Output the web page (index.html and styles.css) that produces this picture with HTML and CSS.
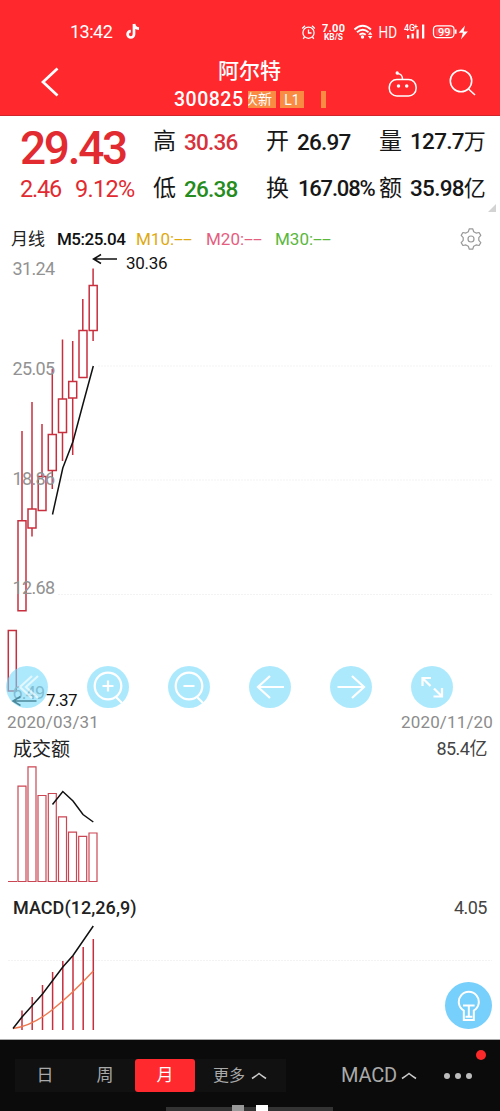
FILE: index.html
```html
<!DOCTYPE html>
<html lang="zh-CN">
<head>
<meta charset="utf-8">
<title>阿尔特 300825</title>
<link rel="stylesheet" href="styles.css">
</head>
<body>
<main class="app">
  <header class="header">
    <div class="status">
      <span class="clock">13:42</span>
      <svg class="note" width="15" height="17" viewBox="0 0 15 17"><path d="M8 1v10.3a3.2 3.2 0 1 1-3.2-3.2M8 1c.4 3 2.1 4.4 5 4.6" fill="none" stroke="#fff" stroke-width="2.7"/></svg>
      <svg class="signals" width="170" height="24" viewBox="300 20 170 24" fill="none" stroke="#fff" stroke-width="1.3">
        <circle cx="308.5" cy="32.7" r="5.6"/><path d="M308.5 29.5v3.5h3M302.2 28.5l2.8-2.8M314.8 28.5l-2.8-2.8M304.5 37l-1.3 1.8M312.5 37l1.3 1.8"/>
        <g fill="#fff" stroke="none">
          <text class="bold" x="322" y="31.5" font-size="11" textLength="23">7.00</text>
          <text class="bold" x="324" y="40.3" font-size="8.5" textLength="19" lengthAdjust="spacingAndGlyphs">KB/S</text>
          <text x="378.5" y="38" font-size="17" textLength="18.5" lengthAdjust="spacingAndGlyphs">HD</text>
          <text class="medium" x="404" y="31" font-size="9" textLength="11" lengthAdjust="spacingAndGlyphs">4G</text>
          <text class="bold" x="414" y="28.500" font-size="7">+</text>
          <text class="medium" x="438" y="35.700" font-size="11" textLength="12.500" lengthAdjust="spacingAndGlyphs">99</text>
          <circle cx="362.500" cy="37" r="1.700"/>
          <path d="M368 34.800l2.200-3 2.200 3zM368 36l2.200 3 2.200-3zM407 35h2.300v3.500H407zM411.500 33.500h2.300v5h-2.300zM416.500 29.500h2.200v9h-2.200zM422 24.500h2.300v14H422zM465 25.500l-6.300 7.200h4.200l-2 6.800 7-8h-4.300z"/>
        </g>
        <path d="M354.500 29.500q8-7.500 16.500 0M357 32.300q5.800-5 11.500 0M359.500 34.800q3-2.600 6.200 0" stroke-width="1.900"/>
        <rect x="433.500" y="25.800" width="20.500" height="11.800" rx="3.500"/><path d="M455.800 29.500v4.200" stroke-width="1.600"/><rect x="435.600" y="27.900" width="16.300" height="7.600" rx="2" fill="#fff" fill-opacity=".18" stroke="none"/>
      </svg>
    </div>
    <div class="titlebar">
      <svg class="back" width="20" height="32" viewBox="0 0 20 32"><path d="M17.500 2.500L3 16l14.500 13.500" fill="none" stroke="#fff" stroke-width="2.700"/></svg>
      <div class="stock">
        <h1 class="name">阿尔特</h1>
        <div class="code-row"><span class="code">300825</span><span class="clip"><span>次新</span></span><span class="tag">L1</span><span class="sliver"></span></div>
      </div>
      <svg class="robot" width="30" height="28" viewBox="0 0 30 28" fill="none" stroke="#fff" stroke-width="1.500"><rect x="1.300" y="9.500" width="26.800" height="16.500" rx="7.500"/><path d="M14.500 9.500c0-4-1-5.500-5-6"/><circle cx="9.200" cy="3" r=".9" fill="#fff"/><circle cx="10.500" cy="16" r="1" fill="#fff"/><circle cx="18.700" cy="16" r="1" fill="#fff"/></svg>
      <svg class="search" width="28" height="28" viewBox="0 0 28 28" fill="none" stroke="#fff" stroke-width="1.600"><circle cx="12" cy="12" r="10.700"/><path d="M19.500 20l6.500 6"/></svg>
    </div>
  </header>

  <section class="quote">
    <div class="price-box">
      <div class="price">29.43</div>
      <div class="change"><span>2.46</span><span class="pct">9.12%</span></div>
    </div>
    <div class="stats">
      <div class="stat"><span class="label">高</span><b class="up">30.36</b></div>
      <div class="stat"><span class="label">开</span><b>26.97</b></div>
      <div class="stat"><span class="label">量</span><b class="right">127.7<i>万</i></b></div>
      <div class="stat"><span class="label">低</span><b class="down">26.38</b></div>
      <div class="stat"><span class="label">换</span><b class="turnover">167.08%</b></div>
      <div class="stat"><span class="label">额</span><b class="right">35.98<i>亿</i></b></div>
    </div>
    <span class="corner"></span>
  </section>

  <section class="chart">
    <div class="legend">
      <span class="period">月线</span><span class="m5">M5:25.04</span><span class="m10">M10:<span class="dash">--</span></span><span class="m20">M20:<span class="dash">--</span></span><span class="m30">M30:<span class="dash">--</span></span>
      <svg class="gear" width="24" height="24" viewBox="0 0 24 24" fill="none" stroke="#999" stroke-width="1.200"><circle cx="12" cy="12" r="3"/><path d="M10.300 1.800h3.400l1 2.900 2.400 1.400 3-.6 1.700 2.900-2 2.300v2.600l2 2.300-1.700 2.900-3-.6-2.400 1.400-1 2.900h-3.400l-1-2.900-2.400-1.400-3 .6-1.700-2.900 2-2.300v-2.600l-2-2.300 1.700-2.900 3 .6 2.400-1.400z" stroke-linejoin="round"/></svg>
    </div>
    <svg class="plot" width="500" height="458" viewBox="0 252 500 458">
      <path class="gridline" d="M98 366H492M58 480H492M58 594.500H492"/>
      <path class="candle" d="M12.300 630.500h4v60.500h-8v-60.500zM22 431v89.700M18 520.700h8v90h-8zM32 402v107M28 509h8v19h-8zM32 528v8.500M42 424v52.500M38.200 476.500h7.800v34h-7.800zM52.300 369v65.500M48.300 434.500h8v36h-8zM52.300 470.500v18.500M62.500 339.500v59.500M58.500 399h8v33.500h-8zM62.500 432.500v28.500M72.700 341v40.500M68.700 381.500h8v16.500h-8zM72.700 398v57M82.800 299v31.500M79 330.500h8v47h-8zM93.100 268.500v17M89.200 285.500h8v45h-8zM93.100 330.500v10.500"/>
      <path class="average" d="M52.500 514.500L62.800 468 73 441.500 83 404 93.300 366"/>
      <g class="axis">
        <text x="12.500" y="274.800" textLength="42.500">31.24</text>
        <text x="12.500" y="375.300" textLength="42.500">25.05</text>
        <text x="12.500" y="485.300" textLength="42.500">18.86</text>
        <text x="12.500" y="594.300" textLength="42.500">12.68</text>
        <text x="12.500" y="699.300" textLength="32.500">6.49</text>
      </g>
      <path class="pointer" d="M117 259H93.500M101 254.500l-7.500 4.500 7.500 4.500M36.500 701H13M20.500 696.500L13 701l7.500 4.500"/>
      <g class="extreme"><text x="126" y="269" textLength="41.500">30.36</text><text x="46" y="706" textLength="31.500">7.37</text></g>
    </svg>
    <div class="tools">
      <span class="tool rewind"><svg viewBox="0 0 42 42"><path d="M26 10L14 21l12 11M32 10L20 21l12 11"/></svg></span>
      <span class="tool"><svg viewBox="0 0 42 42"><circle cx="21" cy="20" r="13.300"/><path d="M21 14.500v11M15.500 20h11M29 31l6 6"/></svg></span>
      <span class="tool"><svg viewBox="0 0 42 42"><circle cx="21" cy="20" r="13.300"/><path d="M15.500 20h11M29 31l6 6"/></svg></span>
      <span class="tool"><svg viewBox="0 0 42 42"><path d="M35 21H9M21 10L9 21l12 11"/></svg></span>
      <span class="tool"><svg viewBox="0 0 42 42"><path d="M7.500 21H33M22 10l12 11-12 11"/></svg></span>
      <span class="tool"><svg viewBox="0 0 42 42"><path d="M11.500 20v-8H20M12 12.500l7.500 7.500M22.500 30.500H31V22M31 30.500l-8-8"/></svg></span>
    </div>
    <div class="dates"><span>2020/03/31</span><span>2020/11/20</span></div>
  </section>

  <section class="panel volume">
    <div class="panel-head"><span class="panel-title cjk">成交额</span><span class="panel-value">85.4亿</span></div>
    <svg class="plot" width="500" height="127" viewBox="0 763 500 127">
      <path class="bars" d="M8 881.500h9M18 881.500V786.200h8v95.300zM28 881.500V766.800h8v114.700zM38 881.500V795.500h8v86zM48.300 881.500V793.500h8v88zM58.500 881.500V816.800h8v64.700zM68.500 881.500V832.200h8v49.300zM78.700 881.500V836.300h8v45.200zM89 881.500V833h8v48.500z"/>
      <path class="average" d="M52.500 804.500L62.800 791.500 73 801 83 814.500 93.300 822"/>
    </svg>
  </section>

  <section class="panel macd">
    <div class="panel-head"><span class="panel-title indicator-title">MACD(12,26,9)</span><span class="panel-value">4.05</span></div>
    <svg class="plot" width="500" height="117" viewBox="0 922 500 117">
      <path class="gridline" d="M8 960.500H492"/>
      <path class="candle" d="M22 1010.500v19.500M32.200 997v33M42.500 985v45M52.600 972v58M62.800 961v69M73 956v74M83.200 947v83M93.300 939v91"/>
      <path class="signal" d="M13 1028.500Q32 1026 52 1010T93.300 971"/>
      <path class="average" d="M13 1028.500L22 1017 42.500 994 62.800 967 73 955.500 93.300 926"/>
    </svg>
    <span class="tip"><svg width="47" height="47" viewBox="0 0 47 47" fill="none" stroke="#fff" stroke-width="2"><path d="M18.800 28.500a10 10 0 1 1 10 0v9.500h-10zM18 23.500h11.600M23.800 23.500v11M20.500 34.800h6.800"/></svg></span>
  </section>

  <footer class="bottom">
    <nav class="periods"><span>日</span><span>周</span><span class="active">月</span><span class="more">更多<svg width="16" height="8" viewBox="0 0 16 8"><path d="M1 6.500Q5 4 8 1.500 11 4 15 6.500"/></svg></span></nav>
    <span class="indicator">MACD<svg width="16" height="8" viewBox="0 0 16 8"><path d="M1 6.500Q5 4 8 1.500 11 4 15 6.500"/></svg></span>
    <span class="dots"><i></i><i></i><i></i></span>
    <span class="badge"></span>
    <span class="handle"><i></i><i></i></span>
  </footer>
</main>
</body>
</html>
```
FILE: styles.css
```css
* { box-sizing: border-box; }
body { margin: 0; background: #fff; }
.app { width: 500px; height: 1111px; overflow: hidden; font-family: Roboto, "Noto Sans CJK SC", sans-serif; color: #222; }
i { font-style: normal; }
svg { display: block; flex: none; }

.header { height: 116px; background: #ff282d; border-bottom: 1px solid #cf252b; color: #fff; }
.status { height: 58px; padding: 20px 30px 0 70px; display: flex; align-items: flex-start; }
.clock { width: 56px; font-size: 18px; line-height: 24px; letter-spacing: -.5px; }
.note { margin-top: 3px; }
.signals { margin-left: auto; }
.bold { font-weight: 700; }
.medium { font-weight: 500; }
.titlebar { height: 57px; display: flex; }
.back { margin: 8px 0 0 40px; }
.stock { width: 214px; margin-left: 83px; padding-left: 31px; flex: none; }
.name { margin: 0 0 0 44px; font-size: 21px; line-height: 26px; font-weight: 500; }
.code-row { height: 31px; display: flex; align-items: center; }
.code { width: 74px; font-size: 19.500px; font-weight: 500; letter-spacing: .5px; }
.clip { width: 28px; height: 17px; overflow: hidden; background: #f98b43; font-size: 14px; line-height: 17px; display: flex; justify-content: flex-end; padding-right: 4px; white-space: nowrap; }
.tag { width: 24px; height: 17px; margin-left: 4px; background: #f98b43; font-size: 14px; line-height: 18px; text-align: center; }
.sliver { width: 5px; height: 17px; margin-left: 17px; background: #f98b43; }
.robot { margin: 12px 0 0 31px; }
.search { margin: 11px 0 0 31px; }

.quote { position: relative; height: 104px; display: flex; padding-top: 4px; color: #171717; }
.price-box { width: 153px; padding-left: 20px; color: #e12b31; }
.price { height: 52px; font-size: 46px; line-height: 56px; font-weight: 500; letter-spacing: -2.300px; }
.change { display: flex; font-size: 23.500px; line-height: 34px; letter-spacing: -1.200px; }
.change span { width: 55px; }
.change .pct { letter-spacing: -.7px; }
.stats { display: grid; grid-template-columns: 113px 113px 107px; grid-template-rows: 46px 48px; }
.stat { display: flex; align-items: center; white-space: nowrap; }
.stat .label { width: 31px; font-size: 23px; line-height: 32px; margin-top: -2px; }
.stat b { font-size: 22.500px; line-height: 32px; font-weight: 500; letter-spacing: -.75px; margin-top: -3px; }
.stat .turnover { letter-spacing: -1.200px; font-size: 22px; padding-left: 1px; }
.stat .right { margin-left: auto; margin-right: 1px; }
.stat i { font-size: 22px; font-weight: 400; }
.stat .up { color: #d7323c; }
.stat .down { color: #258c1d; }
.corner { position: absolute; right: 4px; top: 88px; border-left: 8px solid transparent; border-bottom: 8px solid #d3d3d3; }

.chart { position: relative; height: 513px; }
.legend { height: 32px; padding: 5px 17px 0 11px; display: flex; align-items: center; font-size: 17px; line-height: 24px; white-space: nowrap; }
.period { width: 46px; }
.m5 { width: 79px; font-weight: 500; color: #111; letter-spacing: -.5px; }
.m10 { width: 70px; color: #dea912; }
.m20 { width: 69px; color: #e45e80; }
.m30 { width: 69px; color: #59b83c; }
.dash { display: inline-block; transform: scaleX(1.9); transform-origin: left; }
.gear { margin-left: auto; }
.gridline { stroke: #f3f3f3; fill: none; stroke-dasharray: 2 1; }
.candle { stroke: #c72f3e; stroke-width: 1.500; fill: none; }
.bars { stroke: #cb4653; stroke-width: 1.200; fill: none; }
.average, .pointer { stroke: #111; stroke-width: 1.500; fill: none; }
.signal { stroke: #ed7950; stroke-width: 1.400; fill: none; }
.axis { fill: #929292; font-size: 18px; }
.extreme { fill: #111; font-size: 17px; }
.tools { position: absolute; left: 6px; top: 446px; display: flex; gap: 39px; }
.tool { width: 42px; height: 42px; border-radius: 50%; background: rgba(119, 218, 252, .6); }
.tool svg { width: 42px; height: 42px; fill: none; stroke: #fff; stroke-width: 2.200; }
.rewind svg { opacity: .65; }
.dates { height: 24px; padding: 0 7px; display: flex; justify-content: space-between; color: #8c8c8c; font-size: 17px; line-height: 24px; letter-spacing: .15px; }

.panel-head { display: flex; justify-content: space-between; padding: 1px 13px 0; height: 30px; line-height: 30px; }
.panel-title { font-size: 18px; color: #222; }
.cjk { font-size: 19px; padding-top: 1px; }
.indicator-title { font-weight: 500; letter-spacing: .05px; }
.panel-value { font-size: 18px; color: #444; letter-spacing: -.5px; }
.volume { height: 159px; }
.macd { position: relative; height: 148px; border-bottom: 1px solid #aaa; }
.tip { position: absolute; right: 8px; top: 90px; width: 47px; height: 47px; border-radius: 50%; background: #77cffb; }

.bottom { position: relative; height: 71px; background: #0b0b0b; color: #aaa; display: flex; align-items: flex-start; padding: 19px 0 0 15px; }
.periods { display: flex; width: 271px; height: 33px; background: #111; line-height: 33px; font-size: 17px; }
.periods span { width: 60px; text-align: center; }
.periods .active { background: #ff292e; color: #fff; border-radius: 3px; }
.periods .more { width: 91px; padding-left: 18px; display: flex; align-items: center; gap: 6px; font-size: 16px; }
.bottom svg { fill: none; stroke: #ccc; stroke-width: 1.600; }
.indicator { width: 103px; margin-left: 55px; display: flex; align-items: center; gap: 4px; font-size: 20px; line-height: 33px; letter-spacing: -.2px; }
.dots { height: 33px; display: flex; align-items: center; gap: 5px; }
.dots i { width: 6px; height: 6px; border-radius: 50%; background: #bdbdbd; }
.badge { position: absolute; left: 476px; top: 10px; width: 10px; height: 10px; border-radius: 50%; background: #fb2929; }
.handle { position: absolute; left: 166px; bottom: 0; width: 167px; height: 4px; background: #333; }
.handle i { position: absolute; bottom: 0; left: 66px; width: 12px; height: 6px; background: #999; }
.handle i + i { left: 90px; background: #fff; }
```
